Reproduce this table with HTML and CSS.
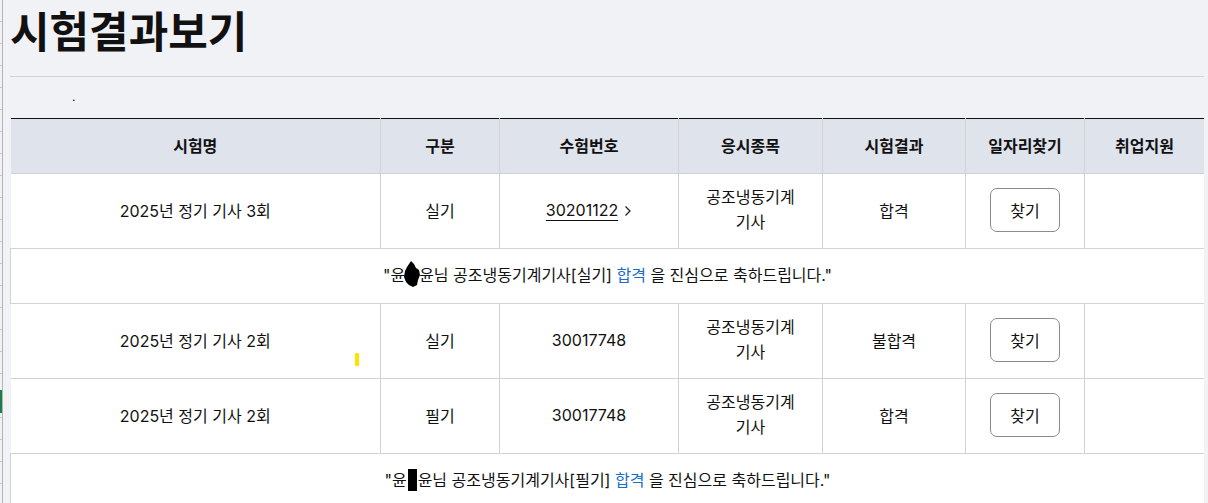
FILE: index.html
```html
<!DOCTYPE html>
<html lang="ko">
<head>
<meta charset="utf-8">
<title>시험결과보기</title>
<link rel="stylesheet" href="styles.css">
</head>
<body>
<div class="gutter"><span class="gutter-mark"></span></div>
<main class="page">
  <h1 class="title">시험결과보기</h1>
  <div class="note">.</div>
  <table class="result">
    <colgroup>
      <col class="c1"><col class="c2"><col class="c3"><col class="c4"><col class="c5"><col class="c6"><col class="c7">
    </colgroup>
    <thead>
      <tr>
        <th>시험명</th><th>구분</th><th>수험번호</th><th>응시종목</th><th>시험결과</th><th>일자리찾기</th><th>취업지원</th>
      </tr>
    </thead>
    <tbody>
      <tr class="data">
        <td>2025년 정기 기사 3회</td>
        <td>실기</td>
        <td><a class="num-link">30201122</a><svg class="chev" width="8" height="12" viewBox="0 0 8 12"><polyline points="1.5,1.5 6,6 1.5,10.5" fill="none" stroke="#222" stroke-width="1.3"/></svg></td>
        <td class="wrap">공조냉동기계<br>기사</td>
        <td>합격</td>
        <td><button class="find">찾기</button></td>
        <td></td>
      </tr>
      <tr class="msg">
        <td colspan="7">"윤<span class="redact blob"><svg width="16" height="26" viewBox="0 0 16 26"><path d="M7 0 L10 3 L12 7 L15 9 L16 14 L14 19 L13 24 L9 26 L5 24 L2 21 L0 16 L1 10 L3 6 L5 3 Z" fill="#000"/></svg></span>윤님 공조냉동기계기사[실기] <span class="pass">합격</span> 을 진심으로 축하드립니다."</td>
      </tr>
      <tr class="data">
        <td>2025년 정기 기사 2회</td>
        <td>실기</td>
        <td>30017748</td>
        <td class="wrap">공조냉동기계<br>기사</td>
        <td>불합격</td>
        <td><button class="find">찾기</button></td>
        <td></td>
      </tr>
      <tr class="data">
        <td>2025년 정기 기사 2회</td>
        <td>필기</td>
        <td>30017748</td>
        <td class="wrap">공조냉동기계<br>기사</td>
        <td>합격</td>
        <td><button class="find">찾기</button></td>
        <td></td>
      </tr>
      <tr class="msg">
        <td colspan="7">"윤<span class="redact box"></span>윤님 공조냉동기계기사[필기] <span class="pass">합격</span> 을 진심으로 축하드립니다."</td>
      </tr>
    </tbody>
  </table>
</main>
<span class="cursor-mark"></span>
</body>
</html>
```
FILE: styles.css
```css
html, body {
  margin: 0;
  padding: 0;
  height: 100%;
  overflow: hidden;
}
body {
  display: flex;
  background: #f1f2f6;
  font-family: Inter, "Noto Sans CJK KR", "Noto Sans", sans-serif;
  color: #111;
  position: relative;
}
.gutter {
  width: 2px;
  flex: none;
  border-right: 1px solid #b4b4b4;
  background: repeating-linear-gradient(to bottom, transparent 0, transparent 21px, #c8c8c8 21px, #c8c8c8 22px);
  position: relative;
}
.gutter-mark {
  position: absolute;
  left: 0;
  top: 390px;
  width: 2px;
  height: 23px;
  background: #1f7a4d;
}
.page {
  flex: 1;
  padding: 0 4px 0 7px;
}
.title {
  margin: 0;
  padding: 2px 0 20px;
  font-family: "Noto Sans CJK KR", sans-serif;
  font-size: 43px;
  line-height: 54px;
  font-weight: 700;
  border-bottom: 1px solid #cfd1d6;
}
.note {
  height: 41px;
  padding-left: 62px;
  font-size: 12px;
  line-height: 40px;
}
.result {
  width: 100%;
  border-collapse: collapse;
  table-layout: fixed;
  border-top: 1px solid #111;
  font-size: 16px;
}
.c1 { width: 370px; }
.c2 { width: 119px; }
.c3 { width: 179px; }
.c4 { width: 144px; }
.c5 { width: 143px; }
.c6 { width: 119px; }
.c7 { width: auto; }
th {
  background: #dfe3ec;
  height: 52px;
  font-weight: 700;
  font-size: 16px;
  padding: 0 0 2px;
  border-bottom: 1px solid #cfd1d6;
  border-left: 1px solid #d3d3d3;
}
th:first-child { border-left: none; }
td {
  background: #fff;
  text-align: center;
  padding: 0;
  border-bottom: 1px solid #d3d3d3;
  border-left: 1px solid #d3d3d3;
}
td:first-child { border-left: none; }
.data td { height: 72px; padding-bottom: 2px; }
.wrap { line-height: 25px; }
.msg td {
  height: 50px;
  padding-bottom: 4px;
  border-left: 1px solid #d3d3d3;
}
.num-link {
  text-decoration: underline;
  text-underline-offset: 4px;
  text-decoration-thickness: 1px;
}
.chev {
  margin-left: 6px;
  vertical-align: -1px;
}
.find {
  width: 70px;
  height: 44px;
  border: 1px solid #8a8a8a;
  border-radius: 7px;
  background: #fff;
  font-family: Inter, "Noto Sans CJK KR", sans-serif;
  font-size: 16px;
  color: #111;
  cursor: pointer;
}
.pass { color: #1b6ec2; }
.redact {
  display: inline-block;
}
.redact svg { display: block; }
.blob { width: 16px; height: 26px; margin: 0 -1px; vertical-align: -6px; }
.box { width: 9px; height: 22px; background: #000; margin: 0 1px; vertical-align: -5px; }
.cursor-mark {
  position: absolute;
  left: 355px;
  top: 353px;
  width: 4px;
  height: 13px;
  background: #ffe100;
  border-radius: 1px;
}
```
